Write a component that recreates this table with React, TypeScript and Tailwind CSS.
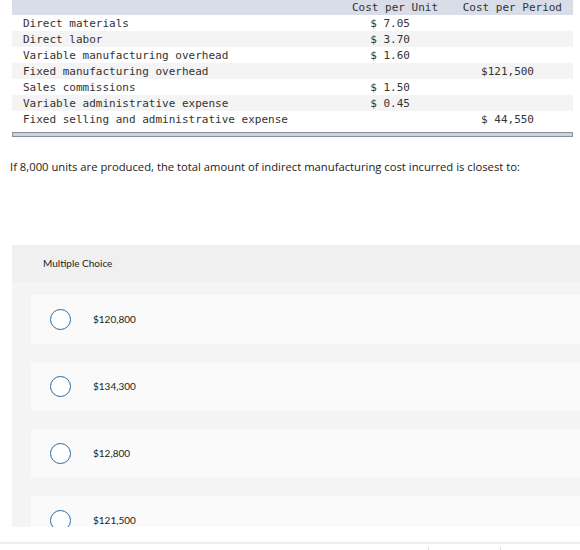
import React from "react";

const rows: { label: string; unit: string; period: string }[] = [
  { label: "Direct materials", unit: "$ 7.05", period: "" },
  { label: "Direct labor", unit: "$ 3.70", period: "" },
  { label: "Variable manufacturing overhead", unit: "$ 1.60", period: "" },
  { label: "Fixed manufacturing overhead", unit: "", period: "$121,500" },
  { label: "Sales commissions", unit: "$ 1.50", period: "" },
  { label: "Variable administrative expense", unit: "$ 0.45", period: "" },
  { label: "Fixed selling and administrative expense", unit: "", period: "$ 44,550" },
];

const choices = ["$120,800", "$134,300", "$12,800", "$121,500"];

export default function App() {
  return (
    <div className="w-[580px] h-[550px] bg-white overflow-hidden relative">
      <div
        className="ml-[12px] w-[561px] text-[11px] text-[#333]"
        style={{ fontFamily: '"DejaVu Sans Mono", monospace' }}
      >
        <div className="flex h-[15px] items-center bg-[#d9dde8] leading-none">
          <div className="flex-1" />
          <div className="w-[109px] text-right pr-[11px] whitespace-pre">Cost per Unit</div>
          <div className="w-[124px] text-right pr-[11px] whitespace-pre">Cost per Period</div>
        </div>
        {rows.map((r, i) => (
          <div
            key={r.label}
            className={`flex h-[16px] items-center leading-none ${i % 2 === 1 ? "bg-[#f4f4f4]" : "bg-white"}`}
          >
            <div className="flex-1 pl-[11px] whitespace-pre">{r.label}</div>
            <div className="w-[109px] text-right pr-[39px] whitespace-pre">{r.unit}</div>
            <div className="w-[124px] text-right pr-[39px] whitespace-pre">{r.period}</div>
          </div>
        ))}
        <div className="mt-[5px] h-[5px] bg-[#ccd2df] border border-[#8a8f99]" />
      </div>

      <p
        className="mt-[24px] ml-[10px] text-[11.25px] text-[#222] leading-none whitespace-nowrap"
        style={{ fontFamily: '"Open Sans", sans-serif' }}
      >
        If 8,000 units are produced, the total amount of indirect manufacturing cost incurred is closest to:
      </p>

      <div
        className="mt-[73px] ml-[12px] h-[282px] overflow-hidden bg-[#f4f4f4]"
        style={{ fontFamily: 'Lato, "Open Sans", sans-serif' }}
      >
        <div className="h-[37px] bg-[#f0f0f0] flex items-center pl-[31px] text-[10px] text-[#222]">
          Multiple Choice
        </div>
        <div className="pt-[13px] pl-[19px] flex flex-col gap-[18px]">
          {choices.map((c) => (
            <div key={c} className="h-[49px] shrink-0 bg-[#fafafa] flex items-center">
              <div className="ml-[19px] w-[21px] h-[21px] rounded-full border-[1.5px] border-[#2e67a0] bg-white" />
              <div className="ml-[22px] text-[10px] text-[#222]">{c}</div>
            </div>
          ))}
        </div>
      </div>

      <div className="mt-[15px] h-[8px] border-t-2 border-[#efefef] relative">
        <div className="absolute left-[428px] top-[3px] w-[1px] h-[5px] bg-[#ddd]" />
        <div className="absolute left-[500px] top-[3px] w-[1px] h-[5px] bg-[#ddd]" />
      </div>
    </div>
  );
}
